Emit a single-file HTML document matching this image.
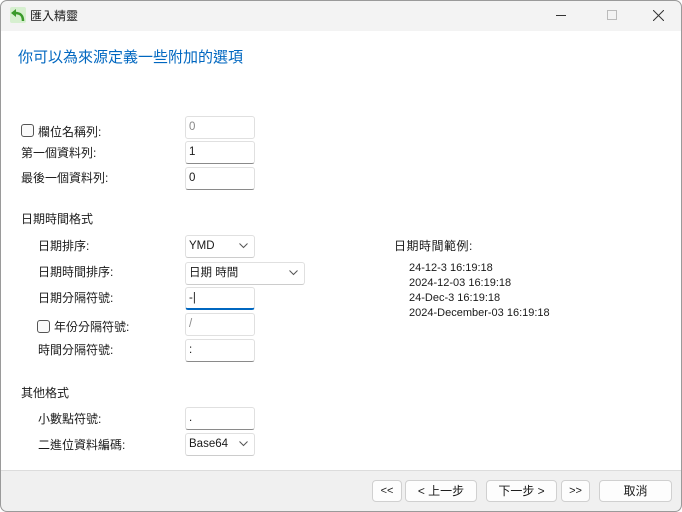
<!DOCTYPE html>
<html><head><meta charset="utf-8"><style>
*{margin:0;padding:0;box-sizing:border-box}
body{width:682px;height:512px;overflow:hidden;background:#fff;font-family:"Liberation Sans","Noto Sans CJK TC",sans-serif;font-size:12px;color:#1a1a1a;position:relative}
.win{position:absolute;left:0;top:0;width:682px;height:512px;border-radius:7px;overflow:hidden;background:#fff}
.frame{position:absolute;left:0;top:0;width:682px;height:512px;border:1px solid #9a9a9a;border-radius:7px;z-index:5}
.title{position:absolute;left:0;top:0;width:100%;height:31px;background:#f3f3f3}
.a{position:absolute;white-space:nowrap;line-height:14px}
.l{font-size:11px}
.in{position:absolute;border:1px solid #e0e0e0;border-bottom:1px solid #8a8a8a;border-radius:3px;background:#fff;padding-left:3px;line-height:20px;font-size:11.5px}
.dis{color:#888;border-bottom-color:#e0e0e0}
.cb{position:absolute;width:13px;height:13px;border:1px solid #555;border-radius:3px;background:#fafafa}
.chev{position:absolute;right:6px;top:7px}
.bot{position:absolute;left:0;top:470px;width:100%;height:42px;background:#f0f0f0;border-top:1px solid #dcdcdc}
.btn{position:absolute;top:9px;height:22px;border:1px solid #d0d0d0;border-radius:4px;background:#fdfdfd;text-align:center;line-height:20px;font-size:12px}
</style></head><body><div class="win">
<div class="title">
<svg style="position:absolute;left:10px;top:7px" width="16" height="16" viewBox="0 0 16 16"><rect x="0" y="0" width="16" height="16" rx="2" fill="#d6efcf"/><path d="M13 14 C13 8 10 6 5 6" stroke="#3a9a2a" stroke-width="2.5" fill="none"/><path d="M1 6 L6 2 L6 10 Z" fill="#3a9a2a"/></svg>
<div class="a" style="left:30px;top:9px">匯入精靈</div>
<div style="position:absolute;left:556px;top:15px;width:10px;height:1px;background:#333"></div>
<div style="position:absolute;left:607px;top:10px;width:10px;height:10px;border:1px solid #bbb"></div>
<svg style="position:absolute;left:653px;top:10px" width="11" height="11"><path d="M0 0L11 11M11 0L0 11" stroke="#333" stroke-width="1"/></svg>
</div>
<div class="a" style="left:18px;top:49px;font-size:15px;line-height:18px;color:#0067c0">你可以為來源定義一些附加的選項</div>

<div class="cb" style="left:21px;top:124px"></div>
<div class="a" style="left:38px;top:125px">欄位名稱列:</div>
<div class="in dis" style="left:185px;top:116px;width:70px;height:23px">0</div>
<div class="a" style="left:21px;top:146px">第一個資料列:</div>
<div class="in" style="left:185px;top:141px;width:70px;height:23px">1</div>
<div class="a" style="left:21px;top:171px">最後一個資料列:</div>
<div class="in" style="left:185px;top:167px;width:70px;height:23px">0</div>

<div class="a" style="left:21px;top:212px">日期時間格式</div>
<div class="a" style="left:38px;top:239px">日期排序:</div>
<div class="in" style="left:185px;top:235px;width:70px;height:23px;border-bottom-color:#ccc">YMD<svg class="chev" width="9" height="6"><path d="M0.5 0.5L4.5 4.5L8.5 0.5" stroke="#555" fill="none"/></svg></div>
<div class="a" style="left:38px;top:265px">日期時間排序:</div>
<div class="in" style="left:185px;top:262px;width:120px;height:23px;border-bottom-color:#ccc">日期 時間<svg class="chev" width="9" height="6"><path d="M0.5 0.5L4.5 4.5L8.5 0.5" stroke="#555" fill="none"/></svg></div>
<div class="a" style="left:38px;top:291px">日期分隔符號:</div>
<div class="in" style="left:185px;top:287px;width:70px;height:23px;border-bottom:2px solid #0067c0">-|</div>
<div class="cb" style="left:37px;top:320px"></div>
<div class="a" style="left:54px;top:320px">年份分隔符號:</div>
<div class="in dis" style="left:185px;top:313px;width:70px;height:23px">/</div>
<div class="a" style="left:38px;top:343px">時間分隔符號:</div>
<div class="in" style="left:185px;top:339px;width:70px;height:23px">:</div>

<div class="a" style="left:394px;top:239px;letter-spacing:0.5px">日期時間範例:</div>
<div class="a l" style="left:409px;top:261px">24-12-3 16:19:18</div>
<div class="a l" style="left:409px;top:276px">2024-12-03 16:19:18</div>
<div class="a l" style="left:409px;top:291px">24-Dec-3 16:19:18</div>
<div class="a l" style="left:409px;top:306px">2024-December-03 16:19:18</div>

<div class="a" style="left:21px;top:386px">其他格式</div>
<div class="a" style="left:38px;top:412px">小數點符號:</div>
<div class="in" style="left:185px;top:407px;width:70px;height:23px">.</div>
<div class="a" style="left:38px;top:438px">二進位資料編碼:</div>
<div class="in" style="left:185px;top:433px;width:70px;height:23px;border-bottom-color:#ccc">Base64<svg class="chev" width="9" height="6"><path d="M0.5 0.5L4.5 4.5L8.5 0.5" stroke="#555" fill="none"/></svg></div>

<div class="bot">
<div class="btn" style="left:372px;width:30px;font-size:11px">&lt;&lt;</div>
<div class="btn" style="left:405px;width:72px">&lt; 上一步</div>
<div class="btn" style="left:486px;width:71px">下一步 &gt;</div>
<div class="btn" style="left:561px;width:29px;font-size:11px">&gt;&gt;</div>
<div class="btn" style="left:599px;width:73px">取消</div>
</div>
</div><div class="frame"></div></body></html>
